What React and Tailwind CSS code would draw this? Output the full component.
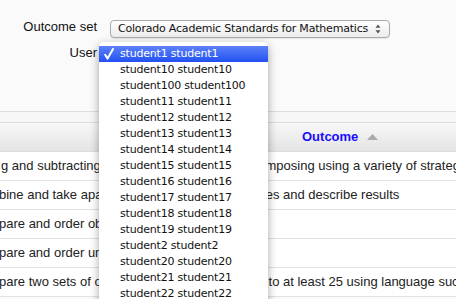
import React from 'react';

const users = [
    'student1 student1',
    'student10 student10',
    'student100 student100',
    'student11 student11',
    'student12 student12',
    'student13 student13',
    'student14 student14',
    'student15 student15',
    'student16 student16',
    'student17 student17',
    'student18 student18',
    'student19 student19',
    'student2 student2',
    'student20 student20',
    'student21 student21',
    'student22 student22',
    'student23 student23',
];

const outcomes = [
    { text: 'g and subtracting numbers to 20, and by decomposing using a variety of strategies', offset: 'ml-[1px]' },
    { text: 'bine and take apart all three-dimensional shapes and describe results', offset: 'ml-[-1px]' },
    { text: 'pare and order objects by length', offset: 'ml-[-1px]' },
    { text: 'pare and order units of time', offset: 'ml-[-1px]' },
    { text: 'pare two sets of objects, including pictures, up to at least 25 using language such as more, less or equal', offset: 'ml-[-1px]' },
];

const SelectArrows = () => (
    <svg width="6" height="10" viewBox="0 0 6 10" className="shrink-0">
        <path d="M3 0.5 L5.5 3.8 L0.5 3.8 Z" fill="#555" />
        <path d="M3 9.5 L5.5 6.2 L0.5 6.2 Z" fill="#555" />
    </svg>
);

const Check = () => (
    <svg width="10" height="12" viewBox="0 0 10 12" className="absolute left-[5px] top-[2px]">
        <path d="M1.2 6.8 L3.6 10.6 L9 1" stroke="white" strokeWidth="2" fill="none" strokeLinecap="round" strokeLinejoin="round" />
    </svg>
);

export default function App() {
    return (
        <div className="relative w-[456px] h-[299px] overflow-hidden bg-[#fafafa] font-['Liberation_Sans',Arial,sans-serif] text-[13px] text-[#222]">
            {/* Form */}
            <div className="h-[112px] border-b border-[#dedede] pt-[19px]">
                <div className="flex items-start">
                    <label className="w-[97px] text-right leading-[15px] text-[#111]">Outcome set</label>
                    <div className="ml-[13px] mt-[1px] w-[280px] h-[18px] flex items-center justify-between pl-[7px] pr-[8px] rounded-[4px] border border-[#a9a9a9] bg-gradient-to-b from-white to-[#ececec] shadow-[0_1px_1px_rgba(0,0,0,0.08)] font-['DejaVu_Sans',sans-serif] text-[11px] tracking-[-0.2px] text-[#111]">
                        <span>Colorado Academic Standards for Mathematics</span>
                        <SelectArrows />
                    </div>
                </div>
                <div className="flex items-start mt-[7px]">
                    <label className="w-[97px] text-right leading-[15px] text-[#111]">User</label>
                </div>
            </div>

            {/* Band above table */}
            <div className="h-[10px] bg-[#f7f7f7]" />

            {/* Table header */}
            <div className="h-[30px] border-y border-[#dcdcdc] bg-gradient-to-b from-[#f8f8f8] to-[#e4e4e4] flex items-center pl-[302px] gap-[9px]">
                <span className="font-bold text-[#1a0dfc]">Outcome</span>
                <svg width="11" height="6" viewBox="0 0 11 6">
                    <path d="M5.5 0 L11 6 L0 6 Z" fill="#aaa" />
                </svg>
            </div>

            {/* Rows */}
            <div className="bg-white">
                {outcomes.map((o, i) => (
                    <div key={i} className="h-[29px] border-b border-[#e2e2e2] flex items-center whitespace-nowrap overflow-hidden">
                        <span className={o.offset}>{o.text}</span>
                    </div>
                ))}
            </div>

            {/* Open user menu */}
            <div className="absolute left-[99px] top-[42px] w-[169px] pt-[4px] rounded-[5px] bg-white shadow-[0_3px_10px_rgba(0,0,0,0.35)] font-['DejaVu_Sans',sans-serif] text-[11px] tracking-[-0.2px] text-[#111]">
                {users.map((u, i) => (
                    <div
                        key={u}
                        className={`relative h-[16px] leading-[16px] pl-[21px] ${i === 0 ? 'bg-gradient-to-b from-[#5d80f8] to-[#2250f2] text-white' : ''}`}
                    >
                        {i === 0 && <Check />}
                        {u}
                    </div>
                ))}
            </div>
        </div>
    );
}
